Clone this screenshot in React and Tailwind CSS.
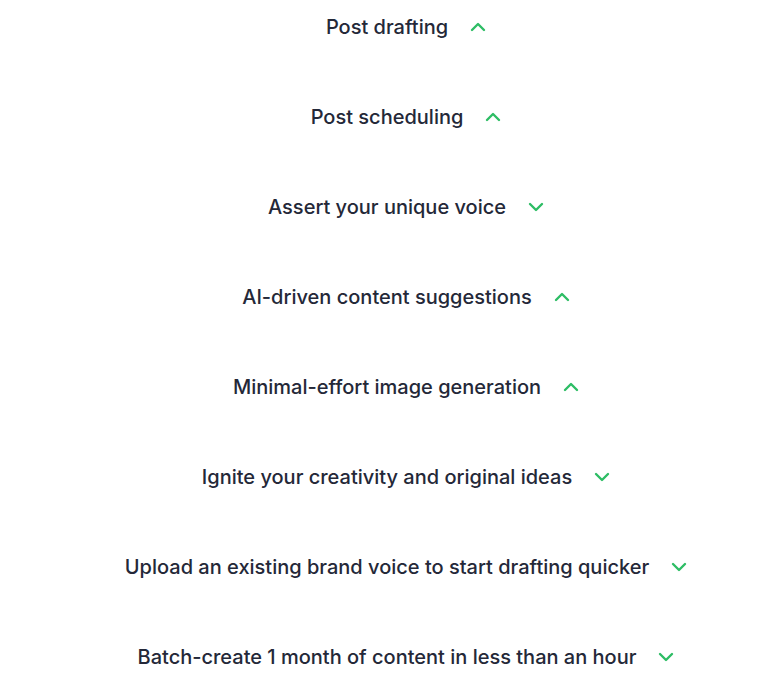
import React from "react";

const items = [
  { t: "Post drafting", up: true },
  { t: "Post scheduling", up: true },
  { t: "Assert your unique voice", up: false },
  { t: "AI-driven content suggestions", up: true },
  { t: "Minimal-effort image generation", up: true },
  { t: "Ignite your creativity and original ideas", up: false },
  { t: "Upload an existing brand voice to start drafting quicker", up: false },
  { t: "Batch-create 1 month of content in less than an hour", up: false },
];

function Chevron({ up }) {
  return (
    <svg
      width="16"
      height="10"
      viewBox="0 0 16 10"
      fill="none"
      stroke="#2ebd65"
      strokeWidth="2.4"
      strokeLinecap="round"
      strokeLinejoin="round"
    >
      {up ? <path d="M2 8 L8 2 L14 8" /> : <path d="M2 2 L8 8 L14 2" />}
    </svg>
  );
}

export default function App() {
  return (
    <div
      className="w-full min-h-[674px] bg-white flex flex-col items-center pt-[12px] gap-[60px]"
      style={{ fontFamily: "Inter, 'Noto Sans', sans-serif" }}
    >
      {items.map((it) => (
        <div key={it.t} className="relative h-[30px] flex items-center">
          <span className="text-[20px] leading-[30px] font-medium text-[#242838] tracking-[0px] whitespace-nowrap">
            {it.t}
          </span>
          <span className="absolute left-full top-1/2 -translate-y-1/2 ml-[22px] flex">
            <Chevron up={it.up} />
          </span>
        </div>
      ))}
    </div>
  );
}
